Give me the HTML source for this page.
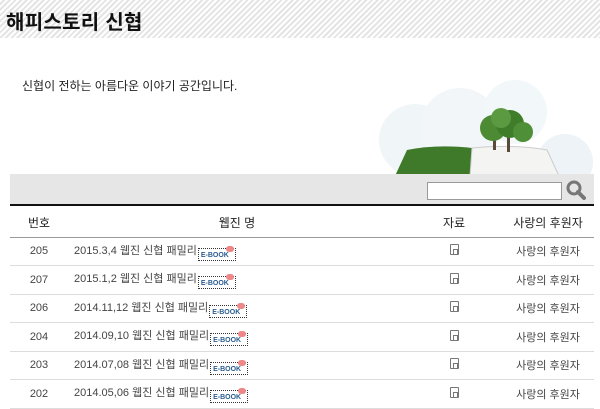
<!DOCTYPE html>
<html><head><meta charset="utf-8"><style>
*{margin:0;padding:0;box-sizing:border-box}
body{width:600px;height:402px;overflow:hidden;background:#fff;font-family:"Liberation Sans","Noto Sans CJK KR",sans-serif;color:#333;position:relative}
.top{position:absolute;left:0;top:0;width:600px;height:38px;background:repeating-linear-gradient(135deg,#fff 0 2px,#e4e4e4 2px 4px)}
.top h1{position:absolute;left:6px;top:6px;font-size:20px;font-weight:bold;color:#111;letter-spacing:0.3px}
.sub{position:absolute;left:22px;top:77px;font-size:12px;color:#222}
.bar{position:absolute;left:10px;top:174px;width:584px;height:32px;background:#e6e6e6;border-bottom:2px solid #111}
.inp{position:absolute;left:427px;top:182px;width:135px;height:18px;background:#fff;border:1px solid #999}
table{position:absolute;left:10px;top:208px;width:584px;border-collapse:collapse;font-size:11px}
th{height:29px;font-weight:normal;font-size:12px;color:#222;border-bottom:1px solid #999;white-space:nowrap}
td{height:28.5px;border-bottom:1px solid #ddd;color:#444;white-space:nowrap}
.c{text-align:center}
.eb{display:inline-block;width:38px;height:13px;border:1px dotted #333;vertical-align:-3px;position:relative;font-size:7px;font-weight:bold;color:#2a5d8f;line-height:14px;padding-left:2px;margin-left:1px}
.eb i{position:absolute;right:1px;top:-3px;width:8px;height:6px;background:#e88;border-radius:3px}
.ic{display:inline-block;width:9px;height:11px;border:1px solid #777;border-radius:1px;position:relative}
.ic:after{content:"";position:absolute;left:2px;top:4px;width:3px;height:4px;border:1px solid #777}
</style></head><body>
<div class="top"><h1>해피스토리 신협</h1></div>
<div class="sub">신협이 전하는 아름다운 이야기 공간입니다.</div>
<svg style="position:absolute;left:375px;top:80px" width="225" height="96">
<circle cx="40" cy="60" r="36" fill="#f0f5f8"/><circle cx="85" cy="48" r="40" fill="#f2f6f9"/><circle cx="140" cy="32" r="32" fill="#f2f7f9"/><circle cx="190" cy="82" r="28" fill="#edf3f6"/>
<path d="M20 96 L32 70 Q62 64 97 68 L95 96 Z" fill="#3f7a2a"/>
<path d="M97 68 Q140 64 172 70 L184 96 L95 96 Z" fill="#f4f4f2" stroke="#ccc"/>
<rect x="118" y="54" width="3" height="16" fill="#5a4a3a"/><rect x="132" y="54" width="3" height="18" fill="#5a4a3a"/>
<circle cx="118" cy="48" r="13" fill="#4d8a34"/><circle cx="135" cy="44" r="14" fill="#3f7d2b"/><circle cx="148" cy="52" r="10" fill="#4e8f37"/><circle cx="126" cy="38" r="10" fill="#5c9a42"/>
</svg>
<div class="bar"></div>
<div class="inp"></div>
<svg style="position:absolute;left:566px;top:180px" width="20" height="20"><circle cx="8" cy="8" r="6" fill="none" stroke="#777" stroke-width="3"/><line x1="12" y1="12" x2="18" y2="18" stroke="#777" stroke-width="4" stroke-linecap="round"/></svg>
<table>
<tr><th style="width:58px">번호</th><th>웹진 명</th><th style="width:96px">자료</th><th style="width:92px">사랑의 후원자</th></tr>
<tr><td class="c">205</td><td style="padding-left:6px">2015.3,4 웹진 신협 패밀리<span class="eb">E-BOOK<i></i></span></td><td class="c"><span class="ic"></span></td><td class="c">사랑의 후원자</td></tr>
<tr><td class="c">207</td><td style="padding-left:6px">2015.1,2 웹진 신협 패밀리<span class="eb">E-BOOK<i></i></span></td><td class="c"><span class="ic"></span></td><td class="c">사랑의 후원자</td></tr>
<tr><td class="c">206</td><td style="padding-left:6px">2014.11,12 웹진 신협 패밀리<span class="eb">E-BOOK<i></i></span></td><td class="c"><span class="ic"></span></td><td class="c">사랑의 후원자</td></tr>
<tr><td class="c">204</td><td style="padding-left:6px">2014.09,10 웹진 신협 패밀리<span class="eb">E-BOOK<i></i></span></td><td class="c"><span class="ic"></span></td><td class="c">사랑의 후원자</td></tr>
<tr><td class="c">203</td><td style="padding-left:6px">2014.07,08 웹진 신협 패밀리<span class="eb">E-BOOK<i></i></span></td><td class="c"><span class="ic"></span></td><td class="c">사랑의 후원자</td></tr>
<tr><td class="c">202</td><td style="padding-left:6px">2014.05,06 웹진 신협 패밀리<span class="eb">E-BOOK<i></i></span></td><td class="c"><span class="ic"></span></td><td class="c">사랑의 후원자</td></tr>
</table>
</body></html>
